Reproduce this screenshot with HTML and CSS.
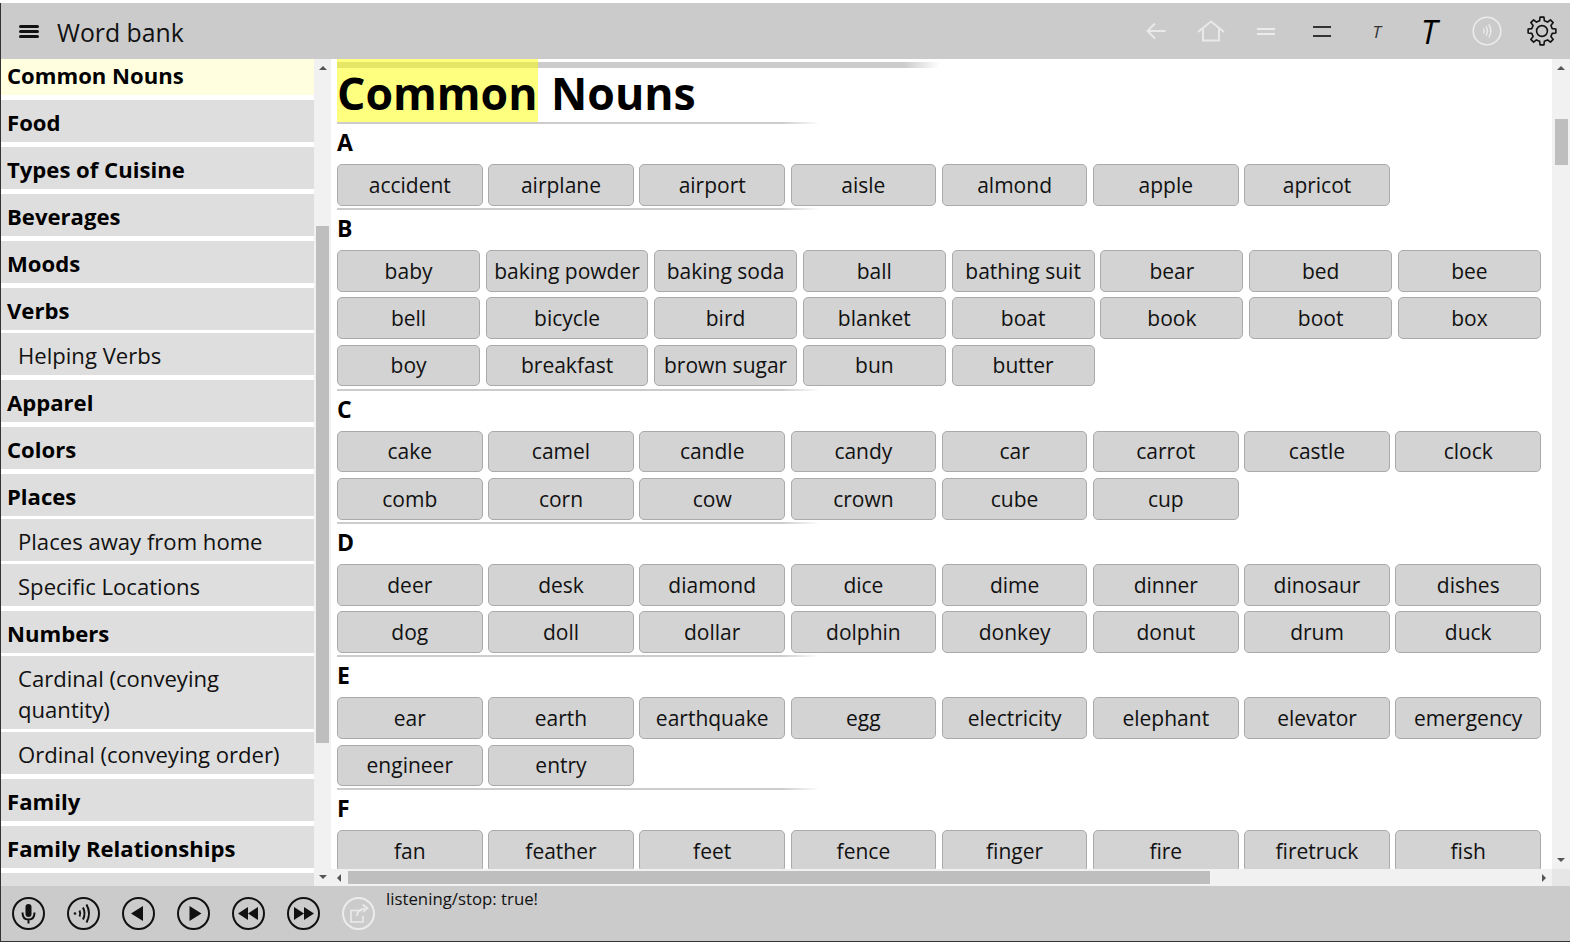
FILE: index.html
```html
<!DOCTYPE html>
<html lang="en">
<head>
  <meta charset="UTF-8">
  <title>Word bank</title>
  <link rel="stylesheet" href="styles.css">
</head>
<body>
  <div class="app">
    <header class="topbar">
      <svg class="menu-icon" width="20" height="13" viewBox="0 0 20 13"><path d="M1.5 1.5H18.5M1.5 6.5H18.5M1.5 11.5H18.5" fill="none" stroke="#111" stroke-width="3" stroke-linecap="round"/></svg>
      <div class="app-title">Word bank</div>
      <div class="tools">
        <div class="tool"><svg width="20" height="18" viewBox="0 0 20 18"><path d="M1.5 9H19.5M9 1.5L1.5 9L9 16.5" fill="none" stroke="#e9e9e9" stroke-width="2"/></svg></div>
        <div class="tool"><svg width="28" height="22" viewBox="0 0 28 22"><path d="M1 12L14 1.5L27 12M6 9V20.5H22V9" fill="none" stroke="#e9e9e9" stroke-width="2"/></svg></div>
        <div class="tool"><svg width="18" height="7" viewBox="0 0 18 7"><path d="M0 1H18M0 6H18" fill="none" stroke="#ececec" stroke-width="2"/></svg></div>
        <div class="tool"><svg width="18" height="11" viewBox="0 0 18 11"><path d="M0 1H18M0 10H18" fill="none" stroke="#333" stroke-width="2"/></svg></div>
        <div class="tool"><span class="t-small">T</span></div>
        <div class="tool"><span class="t-large">T</span></div>
        <div class="tool"><svg width="30" height="30" viewBox="0 0 30 30" fill="none" stroke="#ececec"><circle cx="15" cy="15" r="13.8" stroke-width="1.6"/><path d="M11.5 12.5Q13 15 11.5 17.5M14 10.5Q17 15 14 19.5M16.8 8.5Q21 15 16.8 21.5" stroke-width="1.4"/></svg></div>
        <div class="tool"><svg width="30" height="30" viewBox="-15 -15 30 30"><path d="M-2.36 -10.23L-1.95 -13.86L1.95 -13.86L2.36 -10.23L5.56 -8.9L8.42 -11.18L11.18 -8.42L8.9 -5.56L10.23 -2.36L13.86 -1.95L13.86 1.95L10.23 2.36L8.9 5.56L11.18 8.42L8.42 11.18L5.56 8.9L2.36 10.23L1.95 13.86L-1.95 13.86L-2.36 10.23L-5.56 8.9L-8.42 11.18L-11.18 8.42L-8.9 5.56L-10.23 2.36L-13.86 1.95L-13.86 -1.95L-10.23 -2.36L-8.9 -5.56L-11.18 -8.42L-8.42 -11.18L-5.56 -8.9Z" fill="none" stroke="#111" stroke-width="1.6" stroke-linejoin="round"/><circle r="5.4" fill="none" stroke="#111" stroke-width="1.6"/></svg></div>
      </div>
    </header>

    <div class="middle">
      <nav class="side">
        <div class="side-list">
          <div class="cat first">Common Nouns</div>
          <div class="cat">Food</div>
          <div class="cat">Types of Cuisine</div>
          <div class="cat">Beverages</div>
          <div class="cat">Moods</div>
          <div class="cat">Verbs</div>
          <div class="sub">Helping Verbs</div>
          <div class="cat">Apparel</div>
          <div class="cat">Colors</div>
          <div class="cat">Places</div>
          <div class="sub">Places away from home</div>
          <div class="sub">Specific Locations</div>
          <div class="cat">Numbers</div>
          <div class="sub">Cardinal (conveying quantity)</div>
          <div class="sub">Ordinal (conveying order)</div>
          <div class="cat">Family</div>
          <div class="cat">Family Relationships</div>
          <div class="cat empty"></div>
        </div>
        <div class="vbar side-bar">
          <div class="arrow up"></div>
          <div class="thumb side-thumb"></div>
          <div class="arrow down"></div>
        </div>
      </nav>

      <main class="main">
        <div class="main-row">
          <div class="content">
            <h1 class="page-title"><span class="mark">Common</span> Nouns</h1>
            <div class="rule"></div>

            <h3 class="letter">A</h3>
            <div class="words">
              <button>accident</button><button>airplane</button><button>airport</button><button>aisle</button><button>almond</button><button>apple</button><button>apricot</button>
            </div>
            <div class="rule spaced"></div>

            <h3 class="letter">B</h3>
            <div class="words">
              <button>baby</button><button>baking powder</button><button>baking soda</button><button>ball</button><button>bathing suit</button><button>bear</button><button>bed</button><button>bee</button>
              <button>bell</button><button>bicycle</button><button>bird</button><button>blanket</button><button>boat</button><button>book</button><button>boot</button><button>box</button>
              <button>boy</button><button>breakfast</button><button>brown sugar</button><button>bun</button><button>butter</button>
            </div>
            <div class="rule spaced"></div>

            <h3 class="letter">C</h3>
            <div class="words">
              <button>cake</button><button>camel</button><button>candle</button><button>candy</button><button>car</button><button>carrot</button><button>castle</button><button>clock</button>
              <button>comb</button><button>corn</button><button>cow</button><button>crown</button><button>cube</button><button>cup</button>
            </div>
            <div class="rule spaced"></div>

            <h3 class="letter">D</h3>
            <div class="words">
              <button>deer</button><button>desk</button><button>diamond</button><button>dice</button><button>dime</button><button>dinner</button><button>dinosaur</button><button>dishes</button>
              <button>dog</button><button>doll</button><button>dollar</button><button>dolphin</button><button>donkey</button><button>donut</button><button>drum</button><button>duck</button>
            </div>
            <div class="rule spaced"></div>

            <h3 class="letter">E</h3>
            <div class="words">
              <button>ear</button><button>earth</button><button>earthquake</button><button>egg</button><button>electricity</button><button>elephant</button><button>elevator</button><button>emergency</button>
              <button>engineer</button><button>entry</button>
            </div>
            <div class="rule spaced"></div>

            <h3 class="letter">F</h3>
            <div class="words">
              <button>fan</button><button>feather</button><button>feet</button><button>fence</button><button>finger</button><button>fire</button><button>firetruck</button><button>fish</button>
            </div>
          </div>
          <div class="vbar main-bar">
            <div class="arrow up"></div>
            <div class="thumb main-thumb"></div>
            <div class="arrow down"></div>
          </div>
        </div>
        <div class="hbar">
          <div class="arrow left"></div>
          <div class="hthumb"></div>
          <div class="arrow right"></div>
          <div class="corner"></div>
        </div>
      </main>
    </div>

    <footer class="bottombar">
      <svg class="round" viewBox="0 0 33 33"><circle cx="16.5" cy="16.5" r="15.5" class="ring"/><rect x="13.5" y="7" width="6" height="13" rx="3" fill="#111"/><path d="M10.5 15.5Q10.5 22.5 16.5 22.5Q22.5 22.5 22.5 15.5M16.5 22.5V26.5" class="line"/></svg>
      <svg class="round" viewBox="0 0 33 33"><circle cx="16.5" cy="16.5" r="15.5" class="ring"/><circle cx="8" cy="16.5" r="1.3" fill="#111"/><path d="M12.5 13.5Q14 16.5 12.5 19.5M16 10.5Q19 16.5 16 22.5M19.5 7.5Q24.5 16.5 19.5 25.5" class="line"/></svg>
      <svg class="round" viewBox="0 0 33 33"><circle cx="16.5" cy="16.5" r="15.5" class="ring"/><path d="M9 16.5L21 9V24Z" fill="#111"/></svg>
      <svg class="round" viewBox="0 0 33 33"><circle cx="16.5" cy="16.5" r="15.5" class="ring"/><path d="M24.5 16.5L12.5 9V24Z" fill="#111"/></svg>
      <svg class="round" viewBox="0 0 33 33"><circle cx="16.5" cy="16.5" r="15.5" class="ring"/><path d="M6 16.5L16 10V23ZM16 16.5L26 10V23Z" fill="#111"/></svg>
      <svg class="round" viewBox="0 0 33 33"><circle cx="16.5" cy="16.5" r="15.5" class="ring"/><path d="M27 16.5L17 10V23ZM17 16.5L7 10V23Z" fill="#111"/></svg>
      <svg class="round last" viewBox="0 0 33 33" fill="none" stroke="#ececec"><circle cx="16.5" cy="16.5" r="15.5" stroke-width="2"/><path d="M20 13.5H9V25H21V19M15 19Q15.5 12 23 11.5M20.5 7.5L25.5 11L21 15" stroke-width="1.6"/></svg>
      <div class="status">listening/stop: true!</div>
    </footer>
  </div>
</body>
</html>
```

FILE: styles.css
```css
* {
  margin: 0;
  padding: 0;
  box-sizing: border-box;
}

html, body {
  height: 100%;
  overflow: hidden;
}

body {
  background: #fff;
  font-family: "Open Sans", "Noto Sans", sans-serif;
  color: #111;
}

.app {
  height: 939px;
  margin-top: 3px;
  display: flex;
  flex-direction: column;
  border-left: 1px solid #333;
  border-bottom: 1px solid #333;
}

/* top bar */
.topbar {
  height: 56px;
  flex: none;
  display: flex;
  align-items: center;
  background: #cbcbcb;
}

.menu-icon {
  margin-left: 18px;
  margin-top: 1px;
}

.app-title {
  margin-left: 18px;
  padding-top: 2px;
  font-size: 24.8px;
}

.tools {
  margin-left: auto;
  display: flex;
}

.tool {
  width: 55.2px;
  height: 44px;
  display: flex;
  justify-content: center;
  align-items: center;
}

.t-small {
  font: italic 17px "Open Sans", sans-serif;
  color: #333;
}

.t-large {
  margin-right: 6px;
  font: italic 33px "Open Sans", sans-serif;
  color: #000;
}

/* middle */
.middle {
  flex: 1;
  display: flex;
  min-height: 0;
}

.side {
  width: 330px;
  flex: none;
  display: flex;
}

.side-list {
  width: 313px;
  overflow: hidden;
}

.cat, .sub {
  background: #dedede;
  font-size: 22.1px;
  line-height: 31px;
  padding-top: 7px;
  padding-bottom: 4px;
}

.cat {
  margin-top: 5px;
  padding-left: 6px;
  font-weight: 700;
  color: #000;
}

.cat.first {
  margin-top: -6px;
  background: #ffffe0;
}

.cat.empty {
  height: 42px;
}

.sub {
  margin-top: 3px;
  padding-left: 17px;
}

/* fake scrollbars */
.vbar {
  flex: none;
  display: flex;
  flex-direction: column;
  align-items: center;
  background: #f1f1f1;
  padding-top: 7px;
  padding-bottom: 7px;
}

.side-bar {
  width: 17px;
}

.main-bar {
  width: 18px;
}

.thumb {
  width: 13px;
  background: #bebebe;
}

.side-thumb {
  height: 517px;
  margin-top: 156px;
}

.main-thumb {
  height: 46px;
  margin-top: 49px;
}

.arrow {
  width: 0;
  height: 0;
  border-style: solid;
}

.arrow.up {
  border-width: 0 4px 4px;
  border-color: transparent transparent #555;
}

.arrow.down {
  margin-top: auto;
  border-width: 4px 4px 0;
  border-color: #555 transparent transparent;
}

.arrow.left {
  margin-left: 6px;
  border-width: 4px 4px 4px 0;
  border-color: transparent #555 transparent transparent;
}

.arrow.right {
  margin-left: auto;
  margin-right: 6px;
  border-width: 4px 0 4px 4px;
  border-color: transparent transparent transparent #555;
}

.hbar {
  height: 17px;
  flex: none;
  display: flex;
  align-items: center;
  background: #f1f1f1;
}

.hthumb {
  width: 862px;
  height: 13px;
  margin-left: 7px;
  background: #bebebe;
}

.corner {
  width: 18px;
  align-self: stretch;
  background: #e6e6e6;
}

/* main */
.main {
  flex: 1;
  min-width: 0;
  display: flex;
  flex-direction: column;
}

.main-row {
  flex: 1;
  min-height: 0;
  display: flex;
}

.content {
  flex: 1;
  min-width: 0;
  overflow: hidden;
  padding-left: 6px;
  padding-right: 11px;
}

.page-title {
  height: 63px;
  font-size: 44.6px;
  line-height: 67px;
  font-weight: 700;
  color: #000;
  background: linear-gradient(to right, #ccc 94%, transparent) no-repeat 0 3px / 603px 6px;
}

.mark {
  display: inline-block;
  height: 63px;
  margin-right: 2px;
  background: rgba(255, 255, 0, .5);
}

.rule {
  width: 483px;
  height: 2px;
  background: linear-gradient(to right, #ccc 92%, transparent);
}

.rule.spaced {
  margin-top: 2.33px;
}

.letter {
  height: 40px;
  font-size: 23px;
  line-height: 36px;
  font-weight: 700;
  color: #000;
}

.words {
  display: grid;
  grid-template-columns: repeat(8, 1fr);
  grid-auto-rows: 41.67px;
  gap: 5.67px;
}

.words button {
  padding: 0 7.5px;
  border: 1px solid #aaa;
  border-radius: 5px;
  background: #d3d3d3;
  font-family: inherit;
  font-size: 21px;
  color: #111;
  white-space: nowrap;
}

/* bottom bar */
.bottombar {
  height: 55px;
  flex: none;
  display: flex;
  align-items: flex-start;
  padding: 11px 0 0 11px;
  background: #cbcbcb;
}

.round {
  width: 33px;
  height: 33px;
  margin-right: 22px;
}

.round.last {
  margin-right: 11px;
}

.ring {
  fill: none;
  stroke: #111;
  stroke-width: 2;
}

.line {
  fill: none;
  stroke: #111;
  stroke-width: 2;
}

.status {
  margin-top: -10px;
  font-size: 16.8px;
  line-height: 24px;
}
```
